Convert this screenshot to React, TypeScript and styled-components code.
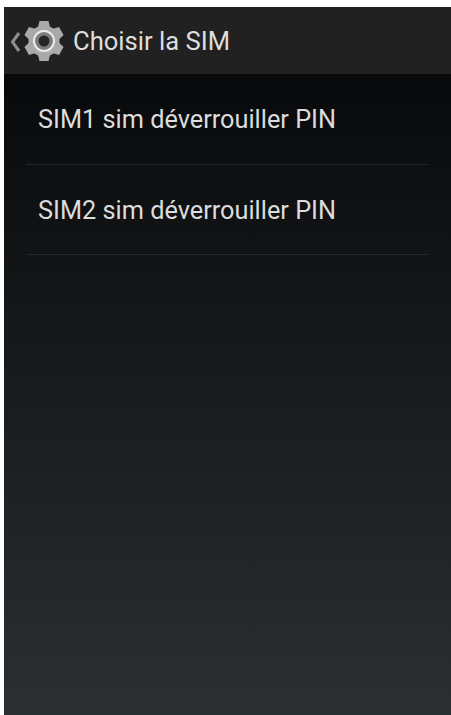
import styled, { createGlobalStyle } from "styled-components";

const GlobalStyle = createGlobalStyle`
  html, body {
    margin: 0;
    padding: 0;
    background: #ffffff;
  }
`;

const Page = styled.div`
  box-sizing: border-box;
  width: 451px;
  height: 715px;
  padding: 7px 0 0 4px;
  overflow: hidden;
  font-family: Roboto, "Liberation Sans", sans-serif;
`;

const Screen = styled.div`
  display: flex;
  flex-direction: column;
  height: 100%;
  background: linear-gradient(180deg, #040506 0%, #2a2f32 100%);
`;

const ActionBar = styled.div`
  display: flex;
  align-items: center;
  flex: none;
  height: 67px;
  padding-left: 6px;
  background: #212121;
`;

const UpIcon = styled.svg`
  width: 11px;
  height: 20px;
  margin-right: 1.5px;
  margin-top: 2px;
`;

const AppIcon = styled.svg`
  width: 42px;
  height: 42px;
  margin-right: 8.5px;
`;

const Title = styled.div`
  font-size: 25.6px;
  color: #dedede;
  white-space: nowrap;
`;

const List = styled.div`
  display: flex;
  flex-direction: column;
  padding: 0 22px;
`;

const Row = styled.div`
  box-sizing: border-box;
  display: flex;
  align-items: center;
  height: 90.5px;
  padding: 2px 0 0 12px;
  border-bottom: 1px solid #22272a;
  font-size: 25.3px;
  color: #dcdcdc;
  white-space: nowrap;
`;

const teeth = [0, 60, 120, 180, 240, 300];

function GearIcon() {
  return (
    <AppIcon viewBox="0 0 42 42">
      {teeth.map((angle) => (
        <path key={angle} d="M16.5 1 H25.5 L27.5 9 H14.5 Z" fill="#a9a9a9" strokeLinejoin="round" transform={`rotate(${angle} 21 21)`} />
      ))}
      <circle cx="21" cy="21" r="15.5" fill="#a9a9a9" />
      <circle cx="21" cy="21" r="10" fill="#7c7c7c" stroke="#ececec" strokeWidth="2" />
      <circle cx="21" cy="21" r="5.5" fill="#262626" />
    </AppIcon>
  );
}

const sims = ["SIM1 sim déverrouiller PIN", "SIM2 sim déverrouiller PIN"];

export default function App() {
  return (
    <Page>
      <GlobalStyle />
      <Screen>
        <ActionBar>
          <UpIcon viewBox="0 0 11 20">
            <path d="M9 1 L2.5 10 L9 19" fill="none" stroke="#8f8f8f" strokeWidth="3" />
          </UpIcon>
          <GearIcon />
          <Title>Choisir la SIM</Title>
        </ActionBar>
        <List>
          {sims.map((sim) => (
            <Row key={sim}>{sim}</Row>
          ))}
        </List>
      </Screen>
    </Page>
  );
}
